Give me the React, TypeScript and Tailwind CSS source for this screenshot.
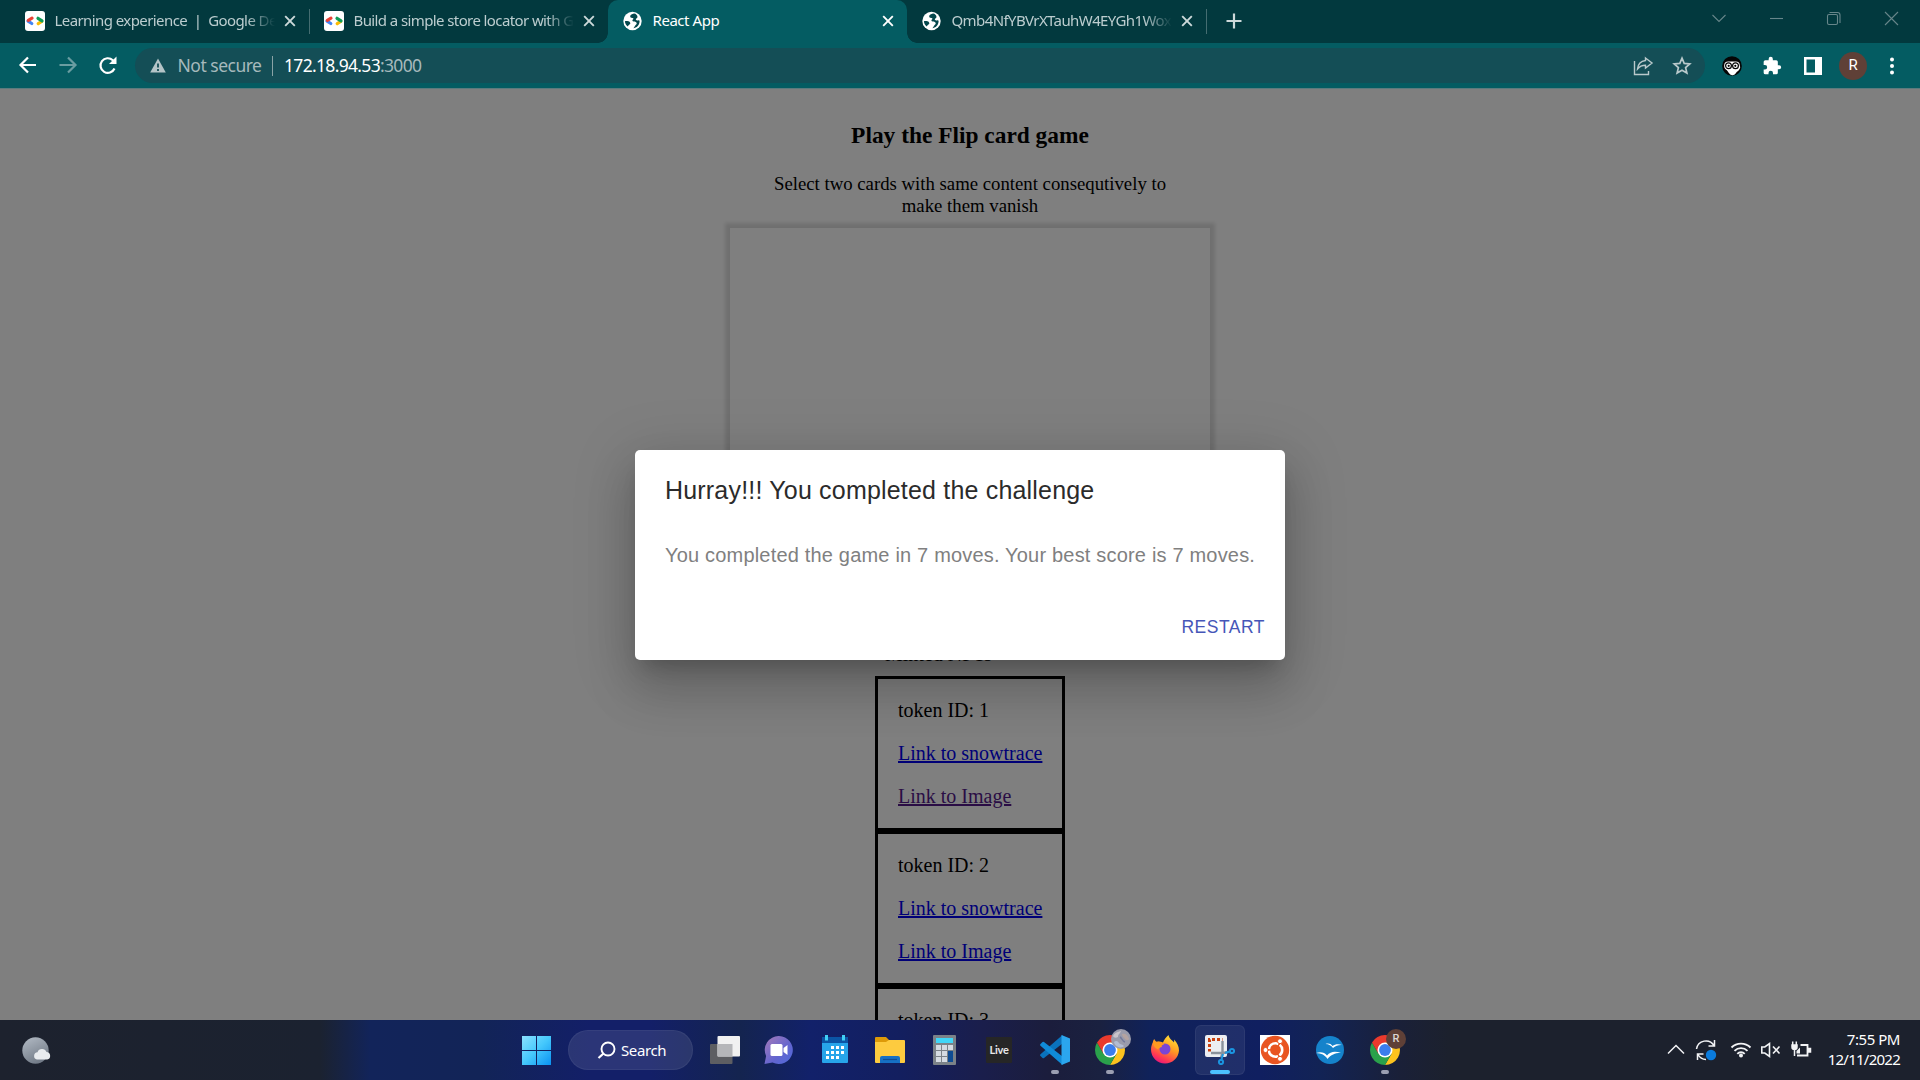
import type { ReactNode } from 'react';

const UI = "font-['Noto_Sans',sans-serif]";

function TabFavicon({ kind }: { kind: 'dev' | 'globe' }) {
  if (kind === 'dev') {
    return (
      <svg className="h-5 w-5 shrink-0" viewBox="0 0 20 20">
        <rect width="20" height="20" rx="3" fill="#fff" />
        <g fill="none" strokeWidth="3.2" strokeLinecap="round">
          <path d="M3 10.200L6.800 12.500" stroke="#4285f4" />
          <path d="M3.300 9.300L7 7.200" stroke="#ea4335" />
          <path d="M16.700 10.500L13.200 12.700" stroke="#fbbc04" />
          <path d="M17 9.800L13 7.300" stroke="#0f9d58" />
        </g>
      </svg>
    );
  }
  return (
    <svg className="h-5 w-5 shrink-0" viewBox="0 0 20 20">
      <circle cx="9.500" cy="10" r="9.2" fill="#fff" />
      <path
        d="M11.5 2.6c-2 .8-3.6 1.2-3.8 2.4-.2 1.4.8 2 2.400 1.900 1 0 1 1 .3 1.700-.8.8-.6 1.800.8 1.900 1.600.1 2.900.4 3 1.700.1 1.100-.9 1.500-1.600 2.500-.7 1.100-1.100 2.200-2.200 2.500 3.900 0 6.700-3.400 6.700-7.200 0-.8-.8-.9-1.600-.6-1.200.4-2.400-.2-2.200-1.300.2-.9 1.600-1.100 1.700-2.200.1-1.200-1.600-3.300-3.500-3.300z"
        fill="#04474c"
        transform="translate(-.5 0)"
      />
      <path d="M1.900 10.200c1.600-.3 4.200-.1 5 1 .8 1.200.4 2-.8 2.600-.8.4-.8 1.300-1.200 1.700-1.800-1.300-2.900-3.100-3-5.300z" fill="#04474c" />
    </svg>
  );
}

function CloseX({ color }: { color: string }) {
  return (
    <svg className="h-3 w-3 shrink-0" viewBox="0 0 12 12" stroke={color} strokeWidth="1.900">
      <path d="M1.200 1.200l9.600 9.600M10.800 1.200L1.200 10.800" />
    </svg>
  );
}

type TabProps = { icon: 'dev' | 'globe'; title: string; track: string; active?: boolean; divider?: boolean; fade?: boolean };

function Tab({ icon, title, track, active, divider, fade }: TabProps) {
  return (
    <div
      className={`relative flex h-[43px] w-[299px] shrink-0 items-center pb-[1px] pl-[15px] ${
        active ? 'rounded-t-[10px] bg-[#045c62] text-white' : 'text-[#bccdcf]'
      }`}
    >
      <TabFavicon kind={icon} />
      <div
        className={`ml-[9.5px] w-[222px] overflow-hidden whitespace-nowrap pb-[2px] text-[15px] leading-5 ${track} ${
          fade ? '[mask-image:linear-gradient(to_right,black_192px,transparent_220px)]' : ''
        }`}
      >
        {title}
      </div>
      <div className="ml-[7.5px] flex">
        <CloseX color={active ? '#fff' : '#cdd9da'} />
      </div>
      {divider && <div className="absolute right-0 top-[9px] h-[25px] w-px translate-x-px bg-[#456d71]" />}
      {active && (
        <>
          <div className="absolute -left-2.5 bottom-0 h-2.5 w-2.5 bg-[radial-gradient(circle_at_top_left,#02393e_9.5px,#045c62_10px)]" />
          <div className="absolute -right-2.5 bottom-0 h-2.5 w-2.5 bg-[radial-gradient(circle_at_top_right,#02393e_9.5px,#045c62_10px)]" />
        </>
      )}
    </div>
  );
}

function TabStrip() {
  return (
    <div className="flex h-[43px] bg-[#02393e] pl-[10px]">
      <Tab icon="dev" title="Learning experience  |  Google De" track="tracking-[-0.58px] whitespace-pre" divider fade />
      <Tab icon="dev" title="Build a simple store locator with G" track="tracking-[-0.6px]" fade />
      <Tab icon="globe" title="React App" track="tracking-[-0.45px]" active />
      <Tab icon="globe" title="Qmb4NfYBVrXTauhW4EYGh1Wox" track="tracking-[-0.6px]" divider fade />
      <svg className="ml-5 mt-[13px] h-4 w-4" viewBox="0 0 16 16" stroke="#cdd9da" strokeWidth="2.200">
        <path d="M8 0.500v15M0.500 8h15" />
      </svg>
      <svg className="ml-auto h-9 w-[230px]" viewBox="0 0 230 36" fill="none" stroke="#67868a" strokeWidth="1.100">
        <path d="M22.500 15l6.500 6.500 6.500-6.500" />
        <path d="M80 18.500h13" />
        <rect x="137.500" y="14.500" width="10" height="10" rx="1.500" />
        <path d="M139.500 12.500h8a2.500 2.500 0 0 1 2.500 2.500v8" />
        <path d="M195 12l13 13M208 12l-13 13" />
      </svg>
    </div>
  );
}

function Toolbar() {
  return (
    <div className="flex h-[45px] items-center bg-[#045c62]">
      <svg className="h-[45px] w-[135px] shrink-0" viewBox="0 0 135 45" fill="none" strokeWidth="2.200">
        <path d="M36 22H21M28 14.500L20.500 22l7.500 7.500" stroke="#fff" />
        <path d="M59.500 22h15M68 14.500l7.500 7.500-7.500 7.500" stroke="#6a9da1" />
        <path d="M114.500 25.500a7.300 7.300 0 1 1-1.700-8.300l2 2" stroke="#fff" />
        <path d="M116.500 13.500v7.500H109z" fill="#fff" />
      </svg>
      <div className="flex h-[35px] w-[1570px] shrink-0 items-center rounded-full bg-[#144e56] text-[17.5px] leading-6">
        <svg className="ml-[15px] h-[15px] w-[16px]" viewBox="0 0 16 15">
          <path d="M8 0.500L15.800 14.500H0.200z" fill="#b4c4c7" />
          <path d="M8 5.500v4M8 11v2" stroke="#144e56" strokeWidth="1.800" />
        </svg>
        <span className="ml-[11.5px] w-[94px] whitespace-nowrap pb-[2px] tracking-[-0.5px] text-[#a6b9bc]">Not secure</span>
        <span className="h-5 w-[1.5px] bg-[#8aa3a6]" />
        <span className="ml-[11px] whitespace-nowrap pb-[2px] tracking-[-0.68px] text-white">
          172.18.94.53<span className="text-[#a6b9bc]">:3000</span>
        </span>
        <svg className="ml-auto mr-[13px] h-5 w-[60px]" viewBox="0 0 60 20" fill="none" stroke="#b9c9cb" strokeWidth="1.400">
          <path d="M2.500 5v13.500h14V15" />
          <path d="M13.500 2l6.500 5-6.500 5V9.300C10 9.300 7.500 10.500 5.500 13c.500-4.500 3.500-8 8-8.500z" />
          <path d="M50 2.200l2.200 5.200 5.600.5-4.200 3.700 1.300 5.500-4.900-2.900-4.900 2.900 1.300-5.500-4.200-3.700 5.600-.5z" strokeWidth="1.700" />
        </svg>
      </div>
      <div className="flex items-center pl-[17px]">
        <svg className="h-5 w-5" viewBox="0 0 20 20">
          <circle cx="10" cy="10" r="9.800" fill="#050505" />
          <path d="M3 10h14.500c1 .5 1 2-.5 4-1.500 1.500-2 1.500-3 3-1.500 2-3 2.500-4.500 2-2-.5-2.500-2-4-4-1.500-1.500-3-3.500-2.500-5z" fill="#fff" />
          <rect x="2.200" y="5.500" width="15.600" height="8.500" rx="4" fill="#fff" />
          <g fill="#fff" stroke="#050505" strokeWidth="1.200">
            <circle cx="6.500" cy="9.800" r="2.900" />
            <circle cx="13.500" cy="9.800" r="2.900" />
          </g>
          <circle cx="6.700" cy="9.800" r="1.100" />
          <circle cx="13.300" cy="9.800" r="1.100" />
        </svg>
        <svg className="ml-5 h-5 w-5" viewBox="0 0 24 24" fill="#fff">
          <path d="M20.500 11H19V7a2 2 0 0 0-2-2h-4V3.500a2.500 2.500 0 0 0-5 0V5H4a2 2 0 0 0-2 2v3.800h1.500a2.700 2.700 0 0 1 0 5.400H2V20a2 2 0 0 0 2 2h3.800v-1.500a2.700 2.700 0 0 1 5.400 0V22H17a2 2 0 0 0 2-2v-4h1.500a2.500 2.500 0 0 0 0-5z" />
        </svg>
        <svg className="ml-[22px] h-[18px] w-[18px]" viewBox="0 0 18 18">
          <rect width="18" height="18" fill="#fff" />
          <rect x="2.500" y="2.500" width="8.500" height="13" fill="#045c62" />
        </svg>
        <div className="ml-[17px] flex h-7 w-7 items-center justify-center rounded-full bg-[#5f4037] font-[Roboto,sans-serif] text-[15px] text-white">R</div>
        <svg className="ml-[22px] h-5 w-[6px]" viewBox="0 0 6 20" fill="#fff">
          <circle cx="3" cy="3.500" r="2" />
          <circle cx="3" cy="10" r="2" />
          <circle cx="3" cy="16.500" r="2" />
        </svg>
      </div>
    </div>
  );
}

function TokenCard({ id, visited }: { id: number; visited?: boolean }) {
  return (
    <div className="flex w-[190px] flex-col items-start gap-5 whitespace-nowrap border-[3px] border-black p-5 text-xl leading-[23px]">
      <p>token ID: {id}</p>
      <a className="text-[#0000ee] underline">Link to snowtrace</a>
      <a className={`underline ${visited ? 'text-[#551a8b]' : 'text-[#0000ee]'}`}>Link to Image</a>
    </div>
  );
}

function Page() {
  return (
    <main className="relative h-[932px] overflow-hidden border-t border-[#5b7b7e] bg-white font-['Liberation_Serif',serif] text-black">
      <div className="flex w-[1940px] flex-col items-center">
        <h3 className="mt-[33px] text-[23.4px] font-bold leading-[27px]">Play the Flip card game</h3>
        <p className="mt-6 w-[420px] text-center text-[18.75px] leading-[22px]">
          Select two cards with same content consequtively to make them vanish
        </p>
        <div className="mt-[11px] h-[400px] w-[480px] shadow-[0_0_4px_5px_rgba(0,0,0,0.13)]" />
        <div className="mt-[15px] w-[190px]">
          <div className="ml-2.5 text-xl leading-[23px]">Minted NFTs</div>
          <div className="mt-2.5">
            <TokenCard id={1} visited />
            <TokenCard id={2} />
            <TokenCard id={3} />
          </div>
        </div>
      </div>
      <div className="absolute inset-0 flex items-start justify-center bg-black/50 pt-[361px]">
        <div className="h-[210px] w-[650px] rounded-[5px] bg-white font-['Liberation_Sans',sans-serif] shadow-[0_14px_19px_-9px_rgba(0,0,0,0.2),0_30px_48px_4px_rgba(0,0,0,0.14),0_11px_58px_10px_rgba(0,0,0,0.12)]">
          <h2 className="px-[30px] py-5 text-[25px] leading-10 tracking-[0.1875px] text-[#2b2b2b]">Hurray!!! You completed the challenge</h2>
          <p className="mt-2.5 whitespace-nowrap px-[30px] text-xl leading-[30px] tracking-[0.1876px] text-[#808080]">
            You completed the game in 7 moves. Your best score is 7 moves.
          </p>
          <div className="mt-[42px] flex justify-end pr-5">
            <button className="text-[17.5px] leading-[31px] tracking-[0.5px] text-[#4656b8]">RESTART</button>
          </div>
        </div>
      </div>
    </main>
  );
}

function Cell({ children, mark, active }: { children: ReactNode; mark?: boolean; active?: boolean }) {
  return (
    <div
      className={`relative flex h-[50px] w-[50px] shrink-0 items-center justify-center rounded-md ${
        active ? 'border border-white/5 bg-white/[0.07]' : ''
      }`}
    >
      {children}
      {mark && <span className="absolute bottom-[1px] h-1 w-2 rounded-full bg-[#9b9fb2]" />}
      {active && <span className="absolute bottom-0 h-1 w-5 rounded-full bg-[#4cc2ff]" />}
    </div>
  );
}

function Chrome() {
  return (
    <svg className="h-[30px] w-[30px]" viewBox="0 0 30 30">
      <path d="M15 15L2.010 7.500A15 15 0 0 1 27.990 7.500H15z" fill="#ea3a2d" />
      <path d="M27.990 7.500H15v7.500l6.500 3.750L15 30A15 15 0 0 0 27.990 7.500z" fill="#fcc31e" />
      <path d="M2.010 7.500A15 15 0 0 0 15 30l6.500-11.250L15 15 8.500 18.750z" fill="#2aa14b" />
      <path d="M2.010 7.500L8.500 18.750 15 15V7.500z" fill="#ea3a2d" />
      <circle cx="15" cy="15" r="7.500" fill="#fff" />
      <circle cx="15" cy="15" r="5.900" fill="#3b7ded" />
    </svg>
  );
}

function Tray() {
  return (
    <svg className="h-[60px] w-[150px]" viewBox="1665 0 150 60" fill="none" stroke="#f2f3f5" strokeWidth="1.500">
      <path d="M1668 33.500l8-8 8 8" />
      <path d="M1696.500 29a9.500 9.500 0 0 1 17.500-3.500M1714.500 20v6h-6M1706 39.500a9.500 9.500 0 0 1-8-5M1697.500 40v-6h6" />
      <circle cx="1711" cy="35" r="5.200" fill="#0a7bdc" stroke="none" />
      <g strokeWidth="1.900">
        <path d="M1731.500 27.500a13.500 13.500 0 0 1 19 0" />
        <path d="M1734.500 30.800a9.200 9.200 0 0 1 13 0" />
        <path d="M1737.300 33.800a5.200 5.200 0 0 1 7.400 0" />
      </g>
      <circle cx="1741" cy="35.500" r="2" fill="#f2f3f5" stroke="none" />
      <path d="M1761.800 27h3l4.700-3.500v13l-4.700-3.500h-3zM1773 26.500l6.500 7M1779.500 26.500l-6.500 7" strokeWidth="1.600" />
      <path d="M1800.500 25h7v10.500h-10.500" strokeWidth="1.800" />
      <path d="M1808.500 28.500h2v3.500h-2z" fill="#f2f3f5" />
      <path d="M1792 25h5v2a2.500 2.500 0 0 1-5 0zM1792.700 21.500v3M1796.300 21.500v3M1794.500 29v7" fill="#f2f3f5" />
      <path d="M1800 27.500v6h-3.500v-2.500z" fill="#f2f3f5" stroke="none" />
    </svg>
  );
}

function Taskbar() {
  return (
    <footer className="flex h-[60px] items-center bg-[linear-gradient(90deg,#1d222e_0px,#1b2230_320px,#12245a_370px,#122457_480px,#131f68_590px,#131f68_650px,#14244f_740px,#12216a_810px,#131f5f_900px,#1a1e4c_980px,#1b1d3c_1050px,#1a2140_1100px,#10225a_1150px,#101f60_1260px,#122355_1320px,#1a2038_1400px,#1c212d_1450px)]">
      <svg className="ml-[22px] h-[27px] w-[30px]" viewBox="0 0 30 27">
        <defs>
          <linearGradient id="moon" x1="0" y1="0" x2="0.500" y2="1">
            <stop offset="0" stopColor="#b4bcc6" />
            <stop offset="1" stopColor="#737c88" />
          </linearGradient>
        </defs>
        <circle cx="13.500" cy="13.500" r="13.200" fill="url(#moon)" />
        <path d="M15 22.500a3.700 3.700 0 0 1 .5-7.300 4.800 4.800 0 0 1 9-.2 3.800 3.800 0 0 1 .7 7.500z" fill="#e9ecef" />
      </svg>
      <div className="ml-[459px] flex items-center">
        <Cell>
          <svg className="h-[29px] w-[29px]" viewBox="0 0 29 29">
            <defs>
              <linearGradient id="win" x1="0" y1="0" x2="29" y2="29" gradientUnits="userSpaceOnUse">
                <stop offset="0" stopColor="#8be1ff" />
                <stop offset="0.500" stopColor="#45c8fc" />
                <stop offset="1" stopColor="#0a92f2" />
              </linearGradient>
            </defs>
            <path d="M0 0h14v14H0zM15 0h14v14H15zM0 15h14v14H0zM15 15h14v14H15z" fill="url(#win)" />
          </svg>
        </Cell>
        <div className="ml-[7px] flex h-10 w-[125px] items-center rounded-full border border-white/5 bg-white/10 pl-7">
          <svg className="h-[18px] w-[19px]" viewBox="0 0 19 18" fill="none" stroke="#fff" strokeWidth="1.900">
            <circle cx="11" cy="8" r="6.500" />
            <path d="M6.500 12.500L1.500 17" strokeWidth="2.200" />
          </svg>
          <span className="ml-[5px] text-[15px] tracking-[-0.4px] text-white">Search</span>
        </div>
        <div className="ml-[7px] flex gap-[5px]">
          <Cell>
            <svg className="h-7 w-[30px]" viewBox="0 0 30 28">
              <rect x="0" y="8" width="22.500" height="20" rx="1" fill="#5d5e62" />
              <rect x="7.500" y="0" width="22.500" height="20.500" rx="1" fill="#f1f1f1" />
              <rect x="7.500" y="8" width="15" height="12.500" fill="#b5b6b9" />
            </svg>
          </Cell>
          <Cell>
            <svg className="mr-[2px] h-7 w-[30px]" viewBox="0 0 30 28">
              <defs>
                <linearGradient id="chat" x1="0" y1="0" x2="1" y2="1">
                  <stop offset="0" stopColor="#a77bb8" />
                  <stop offset="0.600" stopColor="#6264cf" />
                  <stop offset="1" stopColor="#4f6bdc" />
                </linearGradient>
              </defs>
              <path d="M15 0a14 14 0 1 1-6.500 26.500L.5 28l1.600-8A14 14 0 0 1 15 0z" fill="url(#chat)" />
              <rect x="6.500" y="8" width="12" height="12" rx="1.500" fill="#fff" />
              <path d="M19.500 12l4-3v10l-4-3z" fill="#fff" />
            </svg>
          </Cell>
          <Cell>
            <svg className="h-[30px] w-[26px]" viewBox="0 0 26 30">
              <path d="M0 2h26v7H0z" fill="#0b55a5" />
              <path d="M0 8h26v19a1 1 0 0 1-1 1H1a1 1 0 0 1-1-1z" fill="#27a5ea" />
              <path d="M3 0h3v5.500H3zM20 0h3v5.500h-3z" fill="#41d0f5" />
              <path
                d="M9 11h3v3H9zM14 11h3v3h-3zM19 11h3v3h-3zM4 16h3v3H4zM9 16h3v3H9zM14 16h3v3h-3zM19 16h3v3h-3zM4 21h3v3H4zM9 21h3v3H9zM14 21h3v3h-3z"
                fill="#fff"
              />
            </svg>
          </Cell>
          <Cell>
            <svg className="h-[26px] w-[30px]" viewBox="0 0 30 26">
              <path d="M0 1a1 1 0 0 1 1-1h10l3 3v4H0z" fill="#dd9a08" />
              <path d="M0 5h11l3-2h15a1 1 0 0 1 1 1v21a1 1 0 0 1-1 1H1a1 1 0 0 1-1-1z" fill="#fdcb3f" />
              <path d="M5 26v-5a2 2 0 0 1 2-2h16a2 2 0 0 1 2 2v5z" fill="#1670c4" />
              <path d="M8 22.500h14" stroke="#0d4c94" strokeWidth="1.200" />
            </svg>
          </Cell>
          <Cell>
            <svg className="mr-px h-[30px] w-[23px]" viewBox="0 0 23 30">
              <rect width="23" height="30" rx="1" fill="#7b8288" />
              <rect x="3" y="3" width="17" height="5" fill="#40d6f7" />
              <path d="M3 10h5v5H3zM9 10h5v5H9zM15 10h5v5h-5zM3 16h5v5H3zM9 16h5v5H9zM3 22h5v5H3zM9 22h5v5H9z" fill="#d5dbe2" />
              <path d="M15 16h5v11h-5z" fill="#0f4c93" />
            </svg>
          </Cell>
          <Cell>
            <div className="mr-[2px] flex h-[26px] w-[26px] items-center justify-center rounded-[1px] bg-[#262626] font-[Lato,sans-serif] text-[11px] font-bold tracking-[-0.2px] text-[#e8e8e8]">
              Live
            </div>
          </Cell>
          <Cell mark>
            <svg className="h-[30px] w-[30px]" viewBox="0 0 30 30">
              <path d="M22.500 0v8.500L4 23a1.200 1.200 0 0 1-1.500 0L.5 21a1.200 1.200 0 0 1 0-1.700z" fill="#0a72bd" />
              <path d="M22.500 30v-8.500L4 7a1.200 1.200 0 0 0-1.500 0L.5 9a1.200 1.200 0 0 0 0 1.700z" fill="#108bd8" />
              <path d="M21.500 0L30 3.500v23L21.500 30z" fill="#2ba6ee" />
            </svg>
          </Cell>
          <Cell mark>
            <Chrome />
            <svg className="absolute right-1 top-1 h-5 w-5" viewBox="0 0 20 20">
              <circle cx="10" cy="10" r="10" fill="#9a9bab" />
              <path d="M2 7c2-4 5-4 8-5-1 3-3 3-3 6-2 1-4 1-5-1z" fill="#c9c4ca" />
              <path d="M3 13c2-2 4-1 5 1 1 2 4 1 5 3-3 3-9 1-10-4z" fill="#b3bdd2" />
              <path d="M11 5c3-1 6 1 7 5-1 2-3 1-4 0s-3-3-3-5z" fill="#b5a3a0" />
              <path d="M9 8c2 1 2 4 5 5" stroke="#74799a" strokeWidth="1.400" fill="none" />
            </svg>
          </Cell>
          <Cell>
            <svg className="h-[30px] w-[30px]" viewBox="0 0 30 30">
              <defs>
                <linearGradient id="fox" x1="0.800" y1="0" x2="0.300" y2="1">
                  <stop offset="0" stopColor="#ffe83a" />
                  <stop offset="0.450" stopColor="#ff9a22" />
                  <stop offset="0.800" stopColor="#ff3a52" />
                  <stop offset="1" stopColor="#e5157c" />
                </linearGradient>
              </defs>
              <path
                d="M18.500 0c.5 3.500 3.500 5 5.500 7.500.3-1.200.2-2 0-3 3.200 3 5 7 5 11A14 14 0 0 1 15 28.500 14 14 0 0 1 1 14.500C1 11.500 2 9 3 7c0-1 .5-2.200 1.300-3 .5 1.500 1.400 2.500 2.700 2.800 2.500-.6 4 0 6 .8C14 5 16 2 18.500 0z"
                fill="url(#fox)"
              />
              <circle cx="15" cy="14" r="5.500" fill="#7a45d6" />
              <path d="M3 6c1 1.500 2.500 1.200 4 1 3-.5 5 .5 7 2.500-2 .5-3 1-2 2.500-1.500.5-3 .5-4 2.500C4.500 13 2.500 9.500 3 6z" fill="#ff9a20" />
            </svg>
          </Cell>
          <Cell active>
            <svg className="h-[30px] w-[30px]" viewBox="0 0 30 30">
              <rect width="22" height="22" rx="2" fill="#eceef2" />
              <path d="M4.500 16.500V4.500h13" fill="none" stroke="#c8400f" strokeWidth="3" strokeDasharray="3 2" strokeDashoffset="0.500" />
              <path d="M17.500 6v12.500l-1.500 4M6 18h12.500l4-1" fill="none" stroke="#8b929c" strokeWidth="2.400" />
              <path d="M18 19l-1.500 5.500M20 18l4.500-1.500" stroke="#1b95e0" strokeWidth="2" />
              <circle cx="16" cy="27" r="2.100" fill="none" stroke="#1b95e0" strokeWidth="2" />
              <circle cx="27" cy="16" r="2.100" fill="none" stroke="#1b95e0" strokeWidth="2" />
            </svg>
          </Cell>
          <Cell>
            <svg className="h-[30px] w-[30px]" viewBox="0 0 30 30">
              <path d="M0 0h30v30H0z" fill="#fff" />
              <circle cx="15" cy="15" r="14.200" fill="#e95420" />
              <circle cx="15.500" cy="15" r="6.700" fill="none" stroke="#fff" strokeWidth="2.600" strokeDasharray="12.500 1.530" strokeDashoffset="6.200" />
              <g fill="#fff" stroke="#e95420" strokeWidth="1">
                <circle cx="5.500" cy="15" r="2.500" />
                <circle cx="20" cy="6.200" r="2.500" />
                <circle cx="20" cy="23.800" r="2.500" />
              </g>
            </svg>
          </Cell>
          <Cell>
            <svg className="h-7 w-7" viewBox="0 0 28 28">
              <circle cx="14" cy="14" r="14" fill="#1583cb" />
              <path d="M9.500 8c3-1 5.500-.3 7 2 2.500-2 6-2.500 9.500-1-3.500-.2-6.500.8-9 3-2-2.500-4-3.800-7.500-4z" fill="#fff" />
              <path d="M0 17c5-1.500 8.500-.5 11 2.500 3.500-4 8-4.500 14-2.500-5.500-.2-10 1.500-13.500 6C9 19 5.500 17.200 0 17z" fill="#fff" />
            </svg>
          </Cell>
          <Cell mark>
            <Chrome />
            <div className="absolute right-[4px] top-1 flex h-5 w-5 items-center justify-center rounded-full bg-[#5f4037] font-[Roboto,sans-serif] text-[11px] font-medium text-[#ded6d3]">
              R
            </div>
          </Cell>
        </div>
      </div>
      <div className="ml-auto flex items-center">
        <Tray />
        <div className="w-[85px] whitespace-nowrap pb-[3px] text-right text-[15px] leading-5 text-white">
          <div className="tracking-[-0.45px]">7:55 PM</div>
          <div className="tracking-[-0.75px]">12/11/2022</div>
        </div>
        <div className="w-5" />
      </div>
    </footer>
  );
}

export default function App() {
  return (
    <div className={`flex h-[1080px] w-[1920px] flex-col overflow-hidden ${UI}`}>
      <TabStrip />
      <Toolbar />
      <Page />
      <Taskbar />
    </div>
  );
}
